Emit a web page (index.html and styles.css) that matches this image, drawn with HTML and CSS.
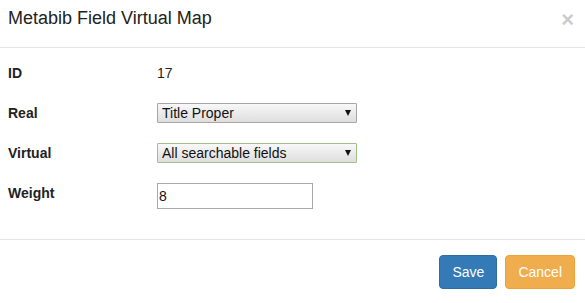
FILE: index.html
```html
<!DOCTYPE html>
<html>
<head>
<meta charset="utf-8">
<link rel="stylesheet" href="styles.css">
</head>
<body>
<div class="modal">
  <div class="modal-header">
    <h4 class="modal-title">Metabib Field Virtual Map</h4>
    <button class="close" type="button">×</button>
  </div>
  <div class="modal-body">
    <div class="row">
      <label class="lbl">ID</label>
      <div class="val">17</div>
    </div>
    <div class="row">
      <label class="lbl">Real</label>
      <span class="sel-wrap"><select class="sel"><option>Title Proper</option></select></span>
    </div>
    <div class="row">
      <label class="lbl">Virtual</label>
      <span class="sel-wrap"><select class="sel sel-active"><option>All searchable fields</option></select></span>
    </div>
    <div class="row row-last">
      <label class="lbl">Weight</label>
      <input class="txt" type="text" value="8">
    </div>
  </div>
  <div class="modal-footer">
    <button class="btn btn-primary" type="button">Save</button>
    <button class="btn btn-warning" type="button">Cancel</button>
  </div>
</div>
</body>
</html>
```

FILE: styles.css
```css
html, body {
  margin: 0;
  padding: 0;
  background: #fff;
}
body {
  font-family: "Liberation Sans", Arial, sans-serif;
  font-size: 14px;
  line-height: 20px;
  color: #333;
}
.modal {
  width: 585px;
  height: 303px;
  display: flex;
  flex-direction: column;
}
.modal-header {
  display: flex;
  justify-content: space-between;
  align-items: flex-start;
  padding: 6px 11px 0 8px;
  height: 41px;
  border-bottom: 1px solid #e5e5e5;
}
.modal-title {
  margin: 0;
  font-size: 18px;
  line-height: 25px;
  font-weight: normal;
  color: #222;
}
.close {
  border: 0;
  background: none;
  padding: 0;
  margin-top: 0;
  font-family: "Liberation Sans", Arial, sans-serif;
  font-size: 22px;
  font-weight: bold;
  line-height: 28px;
  color: #000;
  opacity: 0.2;
  cursor: pointer;
}
.modal-body {
  padding: 15px 8px 0 8px;
  height: 176px;
  border-bottom: 1px solid #e5e5e5;
}
.row {
  display: grid;
  grid-template-columns: 149px 1fr;
  align-items: start;
  margin-bottom: 20px;
  min-height: 20px;
}
.row-last {
  margin-bottom: 0;
}
.lbl {
  font-weight: bold;
  color: #222;
  line-height: 20px;
}
.val {
  line-height: 20px;
  color: #222;
}
.sel-wrap {
  position: relative;
  display: block;
  width: 200px;
  height: 20px;
}
.sel {
  -webkit-appearance: none;
  appearance: none;
  box-sizing: border-box;
  width: 200px;
  height: 20px;
  margin: 0;
  padding: 0 16px 0 4px;
  border: 1px solid #a6a6a6;
  border-radius: 1px;
  background: linear-gradient(#f8f8f8, #dedede);
  font-family: "Liberation Sans", Arial, sans-serif;
  font-size: 14px;
  line-height: 18px;
  color: #111;
}
.sel-active {
  border-color: #a3bd8c;
}
.sel-wrap::after {
  content: "";
  position: absolute;
  right: 6px;
  top: 7px;
  width: 0;
  height: 0;
  border-left: 3.5px solid transparent;
  border-right: 3.5px solid transparent;
  border-top: 6px solid #111;
  pointer-events: none;
}
.txt {
  box-sizing: border-box;
  width: 156px;
  height: 26px;
  margin: 0;
  padding: 0 1px;
  border: 1px solid #a9a9a9;
  font-family: "Liberation Sans", Arial, sans-serif;
  font-size: 14px;
  color: #111;
  background: #fff;
}
.modal-footer {
  display: flex;
  justify-content: flex-end;
  gap: 8px;
  padding: 15px 10px 0 10px;
}
.btn {
  box-sizing: border-box;
  height: 34px;
  padding: 6px 12px;
  border: 1px solid transparent;
  border-radius: 4px;
  font-family: "Liberation Sans", Arial, sans-serif;
  font-size: 14px;
  line-height: 20px;
  color: #fff;
  cursor: pointer;
}
.btn-primary {
  background: #337ab7;
  border-color: #2e6da4;
}
.btn-warning {
  background: #f0ad4e;
  border-color: #eea236;
}
```
